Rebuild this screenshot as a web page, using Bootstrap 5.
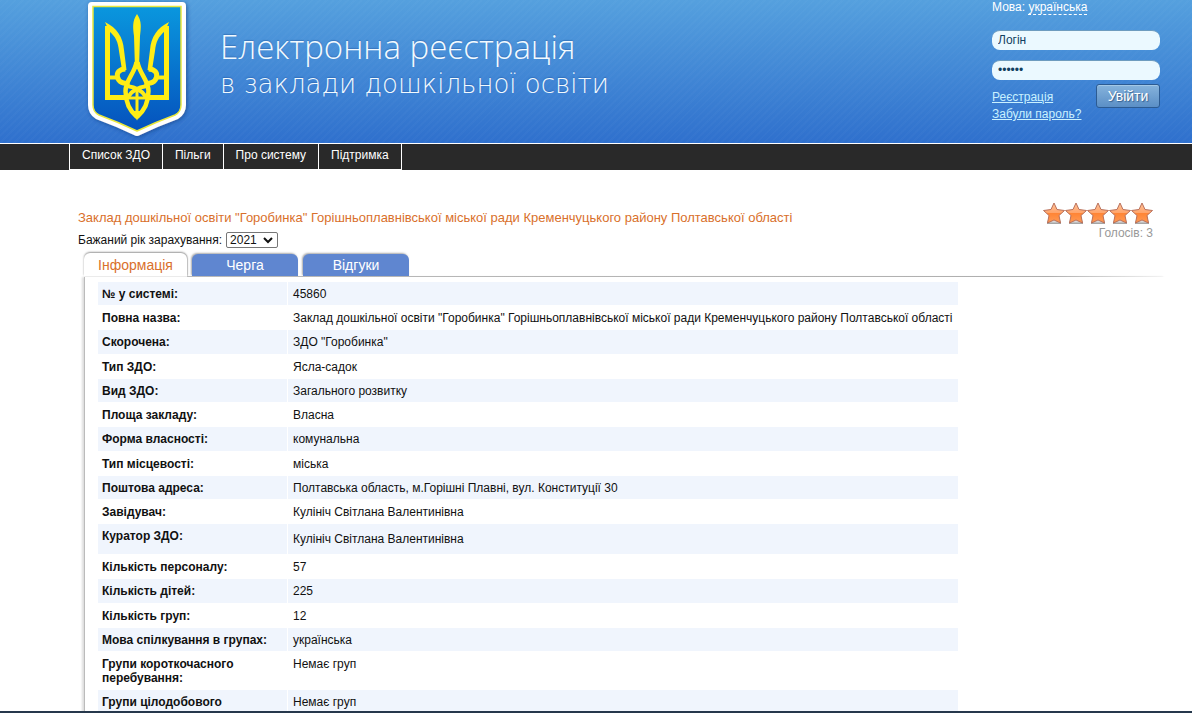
<!DOCTYPE html>
<html lang="uk">
<head>
<meta charset="utf-8">
<meta name="viewport" content="width=device-width, initial-scale=1">
<title>Електронна реєстрація в заклади дошкільної освіти</title>
<link href="https://cdn.jsdelivr.net/npm/bootstrap@5.3.0/dist/css/bootstrap.min.css" rel="stylesheet">
<style>
body { font: 12px/14px "Liberation Sans", Arial, sans-serif; color: #111; background: #fff; }
.page-head { height: 143px; padding-left: 82px; padding-right: 32px;
  background: repeating-linear-gradient(135deg, rgba(255,255,255,.02) 0 2px, transparent 2px 5px), linear-gradient(#55a0de, #2f70cd); }
.emblem { width: 110px; height: 143px; }
.site-title { padding: 28px 0 0 28px; color: #f2faff; text-shadow: 0 -1px 1px rgba(20,70,140,.35); }
.title-top { font: 300 33px/38px "Open Sans", sans-serif; }
.title-sub { font: 200 26px/36px "DejaVu Sans", sans-serif; }
.login { width: 168px; color: #fff; }
.login a { color: #c9f1ff; }
.login .lang { color: #fff; text-decoration: none; border-bottom: 1px dashed #fff; }
.login .form-control { height: 20px; padding: 0 6px 2px; border: 0; border-top: 1px solid #6d9cbf; border-radius: 8px; background: #ebf9ff; color: #12405f; font-size: 12px; line-height: 16px; }
.login .field-gap { margin-bottom: 10px; }
.login-links { gap: 3px; padding-top: 6px; }
.btn-login { width: 64px; height: 24px; padding: 0; border: 1px solid #2c5b92; border-radius: 3px; color: #fff; font-size: 14px; line-height: 20px; background: linear-gradient(#86b3dc, #5b8fc6); text-shadow: 1px 1px 1px #35618f; box-shadow: inset 0 1px 0 #a3c8e6; }
.main-nav { height: 27px; padding-left: 69px; background: #292929; border-top: 1px solid #fff; }
.main-nav .nav-link { padding: 4px 12px 7px; color: #fff; border-right: 1px solid #fff; border-bottom: 1px solid #fff; line-height: 14px; }
.main-nav .nav-item:first-child .nav-link { border-left: 1px solid #fff; }
.main-part { padding: 32px 27px 0 78px; }
.school-name { margin: 0; padding-top: 8px; color: #d9702b; font-size: 13px; line-height: 16px; font-weight: 400; }
.year-row { margin-top: 6px; }
.year { width: 52px; height: 16px; padding: 0 0 0 3px; border: 1px solid #767676; border-radius: 2px; appearance: none; font-size: 12px; line-height: 14px; color: #111;
  background: #fff url("data:image/svg+xml,%3Csvg xmlns='http://www.w3.org/2000/svg' viewBox='0 0 10 7'%3E%3Cpath d='M1 1l4 4 4-4' fill='none' stroke='%23111' stroke-width='2'/%3E%3C/svg%3E") no-repeat right 4px center / 10px 7px; }
.rating { padding-right: 12px; color: #999; }
.rating svg { width: 22px; height: 24px; }
.school-tabs { margin: 5px 0 0 6px; gap: 5px; }
.school-tabs .nav-link { width: 106px; height: 22px; margin: 0; padding: 0; border: 0; border-radius: 6px 6px 0 0; background: #5f86d0; color: #fff; font-size: 14px; line-height: 20px; box-shadow: -1px -1px 2px #aaa; }
.school-tabs .nav-link.active { width: 103px; height: 23px; background: #fff; color: #d9702b; box-shadow: 0 -1px 2px #999, 1px 0 1px #ccc; }
.tab-line { height: 1px; margin-left: 109px; background: linear-gradient(90deg, #aaa 0, #999 88%, transparent); }
.panel-body { margin-left: 6px; padding: 4px 0 0 12px; border-left: 1px solid #bbb; box-shadow: -2px 0 2px #ddd; }
.facts { width: 862px; border-collapse: separate; border-spacing: 1px; }
.facts th { width: 189px; font-weight: 700; }
.facts th, .facts td { height: 23px; padding: 5px 4px 4px; vertical-align: top; }
.facts td { padding-left: 5px; }
.facts .roomy > * { height: 24px; }
.facts .curator > * { height: 30px; }
.facts .curator td { padding-top: 8px; }
.facts tr:nth-child(odd) > * { background: #f0f5fd; }
.task-strip { height: 2px; background: #26384c; }
</style>
</head>
<body>
<div class="vh-100 overflow-hidden">
  <header class="page-head d-flex align-items-start">
    <svg class="emblem flex-shrink-0" viewBox="0 0 110 143" aria-label="Герб України" role="img">
      <defs>
        <linearGradient id="shieldBlue" x2="0" y2="1"><stop stop-color="#0a97de"/><stop offset="1" stop-color="#0552bd"/></linearGradient>
        <filter id="soft" x="-20%" y="-20%" width="140%" height="140%"><feDropShadow dx="1" dy="1" stdDeviation="2" flood-color="#0d3674" flood-opacity=".6"/></filter>
      </defs>
      <path filter="url(#soft)" fill="#fff" d="M10 2H100Q104 2 104 6V105Q104 114 96 119Q77 126 58 135Q55 137 52 135Q33 126 14 119Q6 114 6 105V6Q6 2 10 2Z"/>
      <path fill="url(#shieldBlue)" stroke="#e9e83b" stroke-width="1.500" d="M11 6.500H99V105Q99 112 93 115Q74 122 55 131Q36 122 17 115Q11 112 11 105Z"/>
      <g id="wing" fill="none" stroke="#ffed15">
        <path stroke-width="5" d="M25.500 26V97.500H43"/>
        <path fill="#ffed15" stroke="none" d="M23 22C35 28 41 37 42 50L44.500 70H40L37 51C36 42 34 37 27 31Z"/>
        <path stroke-width="5" d="M43.500 69C37 69 34.500 73 35.500 77C36.500 82 42 84.500 47 82.500"/>
        <path stroke-width="4" d="M26 77.500H35"/>
        <path stroke-width="4.500" d="M54.500 62C53 73 43.500 80 43.500 91C43.500 102 48 111 55 117"/>
        <path stroke-width="4" d="M45 86C53 87 60 90 64 97"/>
        <path stroke-width="3" d="M43 98H55"/>
      </g>
      <use href="#wing" transform="matrix(-1 0 0 1 110 0)"/>
      <path fill="#ffed15" d="M55 14C60 21 59 28 58 36L57 69H53L52 36C51 28 50 21 55 14ZM53.500 91H56.500V118H53.500ZM50 111H60L55 120.500Z"/>
    </svg>
    <div class="site-title flex-grow-1">
      <div class="title-top">Електронна реєстрація</div>
      <div class="title-sub">в заклади дошкільної освіти</div>
    </div>
    <form class="login flex-shrink-0" onsubmit="return false">
      <div class="mb-3">Мова: <a class="lang" href="#">українська</a></div>
      <input class="form-control field-gap" type="text" value="Логін" aria-label="Логін">
      <input class="form-control" type="password" value="secret" aria-label="Пароль">
      <div class="d-flex justify-content-between align-items-start pt-1">
        <div class="login-links d-flex flex-column text-nowrap"><a href="#">Реєстрація</a><a href="#">Забули пароль?</a></div>
        <button class="btn btn-login" type="submit">Увійти</button>
      </div>
    </form>
  </header>
  <nav class="main-nav">
    <ul class="nav flex-nowrap">
      <li class="nav-item"><a class="nav-link" href="#">Список ЗДО</a></li>
      <li class="nav-item"><a class="nav-link" href="#">Пільги</a></li>
      <li class="nav-item"><a class="nav-link" href="#">Про систему</a></li>
      <li class="nav-item"><a class="nav-link" href="#">Підтримка</a></li>
    </ul>
  </nav>
  <main class="main-part">
    <div class="d-flex justify-content-between align-items-start">
      <div>
        <h1 class="school-name">Заклад дошкільної освіти "Горобинка" Горішньоплавнівської міської ради Кременчуцького району Полтавської області</h1>
        <div class="year-row d-flex align-items-center gap-1">
          <label for="year">Бажаний рік зарахування:</label>
          <select class="year" id="year"><option>2021</option></select>
        </div>
      </div>
      <div class="rating text-end flex-shrink-0">
        <div class="d-flex" role="img" aria-label="5 з 5">
          <svg viewBox="0 0 22 24"><defs><linearGradient id="starFill" x2="0" y2="1"><stop stop-color="#ffc39b"/><stop offset=".48" stop-color="#ffa56c"/><stop offset=".5" stop-color="#ff8434"/><stop offset="1" stop-color="#ff9a55"/></linearGradient><linearGradient id="starBase" x2="0" y2="1"><stop stop-color="#fff"/><stop offset="1" stop-color="#999"/></linearGradient>
            <g id="star"><path fill="url(#starBase)" d="M4 18H18V22H4Z"/><path fill="url(#starFill)" stroke="#b9705a" stroke-linejoin="round" d="M11 1L14 7.500 21.500 8.500 16 13.500 17.500 21 11 18 4.500 21 6 13.500.5 8.500 8 7.500Z"/></g></defs><use href="#star"/></svg>
          <svg viewBox="0 0 22 24"><use href="#star"/></svg>
          <svg viewBox="0 0 22 24"><use href="#star"/></svg>
          <svg viewBox="0 0 22 24"><use href="#star"/></svg>
          <svg viewBox="0 0 22 24"><use href="#star"/></svg>
        </div>
        <div>Голосів: 3</div>
      </div>
    </div>
    <ul class="nav school-tabs align-items-end" role="tablist">
      <li><button class="nav-link active" role="tab" aria-selected="true">Інформація</button></li>
      <li><button class="nav-link" role="tab">Черга</button></li>
      <li><button class="nav-link" role="tab">Відгуки</button></li>
    </ul>
    <div class="tab-line"></div>
    <div class="panel-body">
      <table class="facts">
        <tbody>
          <tr><th scope="row">№ у системі:</th><td>45860</td></tr>
          <tr><th scope="row">Повна назва:</th><td class="text-nowrap">Заклад дошкільної освіти "Горобинка" Горішньоплавнівської міської ради Кременчуцького району Полтавської області</td></tr>
          <tr class="roomy"><th scope="row">Скорочена:</th><td>ЗДО "Горобинка"</td></tr>
          <tr><th scope="row">Тип ЗДО:</th><td>Ясла-садок</td></tr>
          <tr><th scope="row">Вид ЗДО:</th><td>Загального розвитку</td></tr>
          <tr><th scope="row">Площа закладу:</th><td>Власна</td></tr>
          <tr class="roomy"><th scope="row">Форма власності:</th><td>комунальна</td></tr>
          <tr><th scope="row">Тип місцевості:</th><td>міська</td></tr>
          <tr><th scope="row">Поштова адреса:</th><td>Полтавська область, м.Горішні Плавні, вул. Конституції 30</td></tr>
          <tr><th scope="row">Завідувач:</th><td>Кулініч Світлана Валентинівна</td></tr>
          <tr class="curator"><th scope="row">Куратор ЗДО:</th><td>Кулініч Світлана Валентинівна</td></tr>
          <tr><th scope="row">Кількість персоналу:</th><td>57</td></tr>
          <tr class="roomy"><th scope="row">Кількість дітей:</th><td>225</td></tr>
          <tr><th scope="row">Кількість груп:</th><td>12</td></tr>
          <tr><th scope="row">Мова спілкування в групах:</th><td>українська</td></tr>
          <tr><th scope="row">Групи короткочасного перебування:</th><td>Немає груп</td></tr>
          <tr><th scope="row">Групи цілодобового</th><td>Немає груп</td></tr>
        </tbody>
      </table>
    </div>
  </main>
</div>
<div class="task-strip fixed-bottom"></div>
<script src="https://cdn.jsdelivr.net/npm/bootstrap@5.3.0/dist/js/bootstrap.bundle.min.js"></script>
</body>
</html>
